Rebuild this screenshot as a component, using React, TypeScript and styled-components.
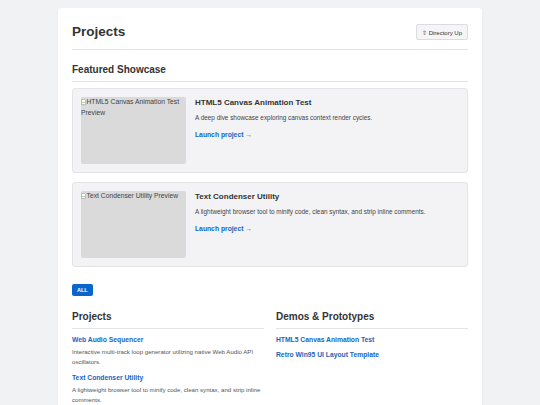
import styled, { createGlobalStyle } from 'styled-components';

const GlobalStyle = createGlobalStyle`
  body {
    margin: 8px 0 0;
    background: #f1f2f4;
    font-family: 'Liberation Sans', Arial, sans-serif;
    color: #333;
  }
`;

const Container = styled.main`
  width: 424px;
  box-sizing: border-box;
  margin: 0 auto;
  padding: 15px 14px 24px;
  background: #fff;
  border-radius: 3px;
  box-shadow: 0 1px 3px rgba(0, 0, 0, 0.05);
`;

const Header = styled.header`
  display: flex;
  justify-content: space-between;
  align-items: center;
  padding-bottom: 8px;
  border-bottom: 1px solid #e4e4e7;
`;

const PageTitle = styled.h1`
  margin: 0;
  font-size: 13.5px;
  line-height: 18px;
  font-weight: bold;
  color: #333;
`;

const UpButton = styled.a`
  display: inline-flex;
  align-items: center;
  height: 16px;
  box-sizing: border-box;
  padding: 0 5px;
  font-size: 6px;
  color: #333;
  background: #f5f5f7;
  border: 1px solid #dcdce0;
  border-radius: 2px;
  text-decoration: none;
`;

const Section = styled.section`
  margin-top: 14px;
`;

const SectionTitle = styled.h2`
  margin: 0 0 6px;
  padding-bottom: 5px;
  font-size: 10px;
  line-height: 12px;
  font-weight: bold;
  color: #333;
  border-bottom: 1px solid #e4e4e7;
`;

const Showcase = styled.div`
  display: flex;
  flex-direction: column;
  gap: 9px;
`;

const FeatureCard = styled.article`
  display: flex;
  gap: 9px;
  padding: 8px;
  background: #f3f3f5;
  border: 1px solid #e4e4e7;
  border-radius: 3px;
`;

const Preview = styled.div`
  flex-shrink: 0;
  width: 105px;
  height: 67px;
  overflow: hidden;
  background: #dadada;
  border-radius: 2px;
  font-size: 6.75px;
  line-height: 1.6;
  color: #444;
`;

const BrokenIcon = styled.svg`
  width: 5px;
  height: 6px;
  margin-right: 0.5px;
  vertical-align: -0.5px;
`;

const CardBody = styled.div`
  display: flex;
  flex-direction: column;
  align-items: flex-start;
`;

const CardTitle = styled.h3`
  margin: 0;
  font-size: 8px;
  line-height: 12px;
  font-weight: bold;
  color: #333;
`;

const CardText = styled.p`
  margin: 4px 0 0;
  font-size: 6.4px;
  line-height: 9.6px;
  color: #444;
`;

const CardLink = styled.a`
  margin-top: 7px;
  font-size: 6.75px;
  line-height: 10px;
  font-weight: bold;
  color: #1565c0;
  text-decoration: none;
`;

const FilterBar = styled.div`
  display: flex;
  gap: 4px;
  margin-top: 17px;
`;

const FilterButton = styled.button<{ $active?: boolean }>`
  height: 12px;
  padding: 0 5px;
  font-family: inherit;
  font-size: 5.5px;
  font-weight: bold;
  color: ${(p) => (p.$active ? '#fff' : '#333')};
  background: ${(p) => (p.$active ? '#0b66cc' : '#f3f3f5')};
  border: none;
  border-radius: 2px;
`;

const Columns = styled.div`
  display: grid;
  grid-template-columns: 1fr 1fr;
  gap: 12px;
  margin-top: 15px;
`;

const ItemList = styled.ul`
  display: flex;
  flex-direction: column;
  gap: 5px;
  margin: 0;
  padding: 0;
  list-style: none;
`;

const ItemLink = styled.a`
  display: block;
  font-size: 6.75px;
  line-height: 10px;
  font-weight: bold;
  color: #1565c0;
  text-decoration: none;
`;

const ItemText = styled.p`
  margin: 2px 0;
  font-size: 6.1px;
  line-height: 9.6px;
  color: #555;
`;

const featured = [
  {
    title: 'HTML5 Canvas Animation Test',
    text: 'A deep dive showcase exploring canvas context render cycles.',
  },
  {
    title: 'Text Condenser Utility',
    text: 'A lightweight browser tool to minify code, clean syntax, and strip inline comments.',
  },
];

const projects = [
  {
    title: 'Web Audio Sequencer',
    text: 'Interactive multi-track loop generator utilizing native Web Audio API oscillators.',
  },
  {
    title: 'Text Condenser Utility',
    text: 'A lightweight browser tool to minify code, clean syntax, and strip inline comments.',
  },
];

const demos = ['HTML5 Canvas Animation Test', 'Retro Win95 UI Layout Template'];

const Broken = () => (
  <BrokenIcon viewBox="0 0 10 12">
    <path d="M1 1h6l2 2v8H1z" fill="#fff" stroke="#888" strokeWidth="1" />
    <path d="M2 8l2-2 2 2 2-2" fill="none" stroke="#6a9c4a" strokeWidth="1" />
  </BrokenIcon>
);

export default function App() {
  return (
    <>
      <GlobalStyle />
      <Container>
        <Header>
          <PageTitle>Projects</PageTitle>
          <UpButton href="#">⇧ Directory Up</UpButton>
        </Header>

        <Section>
          <SectionTitle>Featured Showcase</SectionTitle>
          <Showcase>
            {featured.map((f) => (
              <FeatureCard key={f.title}>
                <Preview>
                  <Broken />
                  {f.title} Preview
                </Preview>
                <CardBody>
                  <CardTitle>{f.title}</CardTitle>
                  <CardText>{f.text}</CardText>
                  <CardLink href="#">Launch project →</CardLink>
                </CardBody>
              </FeatureCard>
            ))}
          </Showcase>
        </Section>

        <FilterBar>
          <FilterButton $active>ALL</FilterButton>
        </FilterBar>

        <Columns>
          <div>
            <SectionTitle>Projects</SectionTitle>
            <ItemList>
              {projects.map((p) => (
                <li key={p.title}>
                  <ItemLink href="#">{p.title}</ItemLink>
                  <ItemText>{p.text}</ItemText>
                </li>
              ))}
            </ItemList>
          </div>
          <div>
            <SectionTitle>Demos &amp; Prototypes</SectionTitle>
            <ItemList>
              {demos.map((d) => (
                <li key={d}>
                  <ItemLink href="#">{d}</ItemLink>
                </li>
              ))}
            </ItemList>
          </div>
        </Columns>
      </Container>
    </>
  );
}
